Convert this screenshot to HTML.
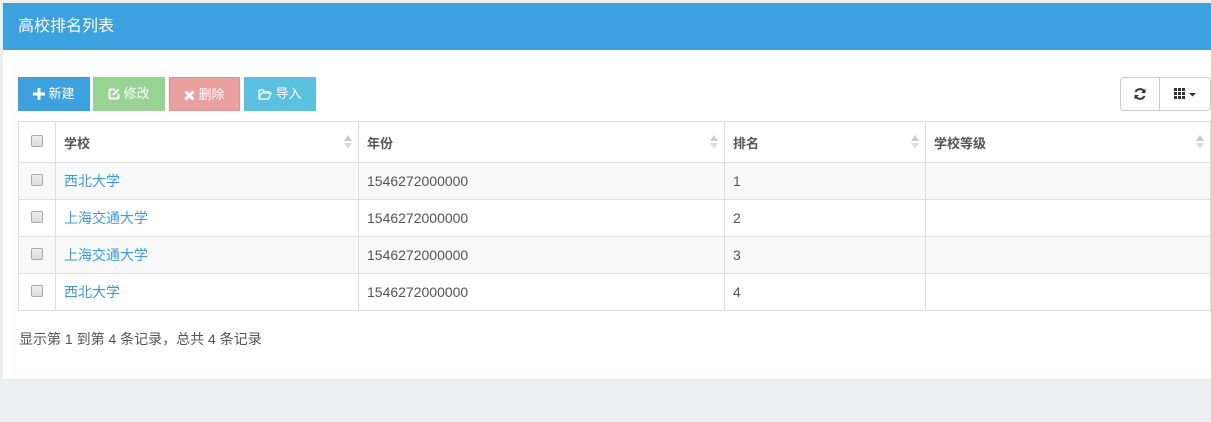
<!DOCTYPE html>
<html><head><meta charset="utf-8"><style>
*{box-sizing:border-box;margin:0;padding:0}
body{width:1211px;height:422px;background:#ecf0f1;font-family:"Liberation Sans","Noto Sans CJK SC",sans-serif;font-size:14px;color:#555;position:relative;overflow:hidden}
.panel{position:absolute;left:3px;top:3px;width:1208px;height:377px;background:#fff;border-bottom:1px solid #e4e8e9}
.hd{height:47px;background:#3ca2df;color:#fff;font-size:16px;line-height:48px;padding-left:15px}
.btn{position:absolute;top:74px;height:34px;color:#fff;font-size:13px;line-height:34px;text-align:center}
.btn svg{vertical-align:-2px;margin-right:3px}
table{position:absolute;left:15px;top:118px;width:1193px;border-collapse:collapse;border:1px solid #ddd;border-right:none}
td,th{border:1px solid #ddd;height:37px;padding:0 8px;text-align:left;font-size:14px}
th{height:41px;font-weight:bold;color:#555;position:relative;font-size:13px}
tr.o td{background:#f9f9f9}
.cb{width:12px;height:12px;border:1px solid #aaa;border-radius:2px;background:linear-gradient(#eee,#ddd);display:inline-block;vertical-align:middle;position:relative;top:-2px}
a{color:#3c9be0;text-decoration:none}
.s{position:absolute;right:6px;top:13px;width:8px;height:16px}
.s:before{content:"";position:absolute;left:0;top:0;border:4px solid transparent;border-bottom:6px solid #ccc;border-top:0}
.s:after{content:"";position:absolute;left:0;top:8px;border:4px solid transparent;border-top:6px solid #ddd;border-bottom:0}
.tb{position:absolute;top:74px;height:34px;border:1px solid #ccc;background:#fff;display:flex;align-items:center;justify-content:center}
</style></head><body>
<div class="panel">
<div class="hd">高校排名列表</div>
<div class="btn" style="left:15px;width:72px;background:#3ca2df"><svg width="12" height="12" viewBox="0 0 12 12"><path d="M6 0v12M0 6h12" stroke="#fff" stroke-width="3"/></svg>新建</div>
<div class="btn" style="left:90px;width:72px;background:#98d394"><svg width="12" height="12" viewBox="0 0 12 12"><path d="M7 1.5H2.5a1 1 0 0 0-1 1v7a1 1 0 0 0 1 1h7a1 1 0 0 0 1-1V6" fill="none" stroke="#fff" stroke-width="2"/><path d="M5 7l5.5-5.5" stroke="#fff" stroke-width="2.2"/></svg>修改</div>
<div class="btn" style="left:166px;width:71px;background:#eaa09e;border:1px solid #e29390"><svg width="11" height="11" viewBox="0 0 11 11"><path d="M1.5 1.5l8 8M9.5 1.5l-8 8" stroke="#fff" stroke-width="3"/></svg>删除</div>
<div class="btn" style="left:241px;width:72px;background:#5bc1e0"><svg width="14" height="12" viewBox="0 0 14 12"><path d="M1 2h4l1 1.5h5V5M1 2v9h9.5l2.5-6H3.5L1 11" fill="none" stroke="#fff" stroke-width="1.3" stroke-linejoin="round"/></svg>导入</div>
<div class="tb" style="left:1117px;width:40px;border-radius:4px 0 0 4px"><svg width="14" height="14" viewBox="0 0 14 14"><path d="M11.5 5A5 5 0 0 0 2.5 5M2.5 9a5 5 0 0 0 9 0" fill="none" stroke="#333" stroke-width="2"/><path d="M12.5 1.5v4.5H8zM1.5 12.5V8H6z" fill="#333"/></svg></div>
<div class="tb" style="left:1156px;width:52px;border-radius:0 4px 4px 0"><svg width="22" height="12" viewBox="0 0 22 12"><g fill="#333"><rect x="0" y="0" width="3" height="3"/><rect x="4" y="0" width="3" height="3"/><rect x="8" y="0" width="3" height="3"/><rect x="0" y="4" width="3" height="3"/><rect x="4" y="4" width="3" height="3"/><rect x="8" y="4" width="3" height="3"/><rect x="0" y="8" width="3" height="3"/><rect x="4" y="8" width="3" height="3"/><rect x="8" y="8" width="3" height="3"/><path d="M15 5h7l-3.5 3.5z"/></g></svg></div>
<table>
<tr><th style="width:37px;text-align:center"><span class="cb"></span></th><th style="width:303px">学校<i class="s"></i></th><th style="width:366px">年份<i class="s"></i></th><th style="width:201px">排名<i class="s"></i></th><th>学校等级<i class="s"></i></th></tr>
<tr class="o"><td style="text-align:center"><span class="cb"></span></td><td><a>西北大学</a></td><td>1546272000000</td><td>1</td><td></td></tr>
<tr><td style="text-align:center"><span class="cb"></span></td><td><a>上海交通大学</a></td><td>1546272000000</td><td>2</td><td></td></tr>
<tr class="o"><td style="text-align:center"><span class="cb"></span></td><td><a>上海交通大学</a></td><td>1546272000000</td><td>3</td><td></td></tr>
<tr><td style="text-align:center"><span class="cb"></span></td><td><a>西北大学</a></td><td>1546272000000</td><td>4</td><td></td></tr>
</table>
<div style="position:absolute;left:16px;top:326px;font-size:14px;color:#555">显示第 1 到第 4 条记录，总共 4 条记录</div>
</div>
</body></html>
